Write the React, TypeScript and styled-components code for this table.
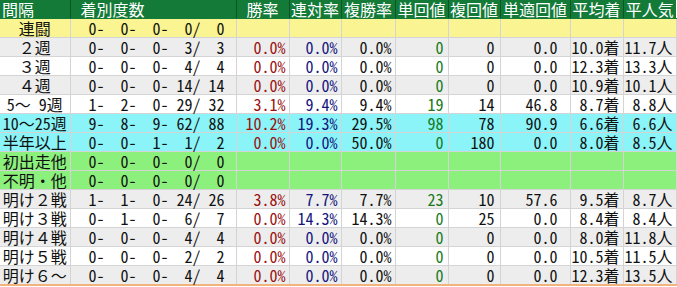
import React from "react";
import styled, { createGlobalStyle } from "styled-components";

const GlobalStyle = createGlobalStyle`
	body {
		margin: 0;
		background: #ffffff;
		font-family: "Noto Sans Mono CJK JP", "Noto Sans CJK JP", "DejaVu Sans Mono", monospace;
	}
`;

const Table = styled.table`
	border-collapse: collapse;
	table-layout: fixed;
	width: 676px;
	font-size: 16px;
	border-bottom: 2px solid #f2b47c;
`;

const HeadCell = styled.th<{ $align?: string; $pl?: number; $first?: boolean }>`
	height: 18px;
	padding: 0 0 0 ${(p) => p.$pl ?? 0}px;
	line-height: 18px;
	background: #137a38;
	color: #ffffff;
	font-weight: normal;
	text-align: ${(p) => p.$align ?? "center"};
	border-left: ${(p) => (p.$first ? "none" : "1px solid #0b5524")};
	border-bottom: 1px solid #137a38;
	white-space: nowrap;
`;

const Row = styled.tr<{ $bg: string }>`
	background: ${(p) => p.$bg};
`;

const Cell = styled.td<{ $color?: string; $pr?: number }>`
	height: 18px;
	padding: 0 ${(p) => p.$pr ?? 3}px 0 0;
	line-height: 18px;
	color: ${(p) => p.$color ?? "#111111"};
	text-align: right;
	border: 1px solid #d4d4d4;
	border-top: none;
	white-space: nowrap;
`;

const NameCell = styled(Cell)`
	padding: 0;
	text-align: center;
	border-left: none;
`;

const Counts = styled.div`
	display: grid;
	grid-template-columns: 34px 32px 32px 32px 24px;
	justify-items: end;
`;

const colors = {
	yellow: "#faf592",
	gray: "#ededed",
	white: "#ffffff",
	cyan: "#8af4f8",
	green: "#8cf07c",
};

type Data = {
	name: string;
	bg: string;
	counts: number[];
	vals?: string[];
};

const rows: Data[] = [
	{ name: "連闘", bg: colors.yellow, counts: [0, 0, 0, 0, 0] },
	{ name: "２週", bg: colors.gray, counts: [0, 0, 0, 3, 3], vals: ["0.0%", "0.0%", "0.0%", "0", "0", "0.0", "10.0着", "11.7人"] },
	{ name: "３週", bg: colors.white, counts: [0, 0, 0, 4, 4], vals: ["0.0%", "0.0%", "0.0%", "0", "0", "0.0", "12.3着", "13.3人"] },
	{ name: "４週", bg: colors.gray, counts: [0, 0, 0, 14, 14], vals: ["0.0%", "0.0%", "0.0%", "0", "0", "0.0", "10.9着", "10.1人"] },
	{ name: "5〜 9週", bg: colors.white, counts: [1, 2, 0, 29, 32], vals: ["3.1%", "9.4%", "9.4%", "19", "14", "46.8", "8.7着", "8.8人"] },
	{ name: "10〜25週", bg: colors.cyan, counts: [9, 8, 9, 62, 88], vals: ["10.2%", "19.3%", "29.5%", "98", "78", "90.9", "6.6着", "6.6人"] },
	{ name: "半年以上", bg: colors.cyan, counts: [0, 0, 1, 1, 2], vals: ["0.0%", "0.0%", "50.0%", "0", "180", "0.0", "8.0着", "8.5人"] },
	{ name: "初出走他", bg: colors.green, counts: [0, 0, 0, 0, 0] },
	{ name: "不明・他", bg: colors.green, counts: [0, 0, 0, 0, 0] },
	{ name: "明け２戦", bg: colors.gray, counts: [1, 1, 0, 24, 26], vals: ["3.8%", "7.7%", "7.7%", "23", "10", "57.6", "9.5着", "8.7人"] },
	{ name: "明け３戦", bg: colors.white, counts: [0, 1, 0, 6, 7], vals: ["0.0%", "14.3%", "14.3%", "0", "25", "0.0", "8.4着", "8.4人"] },
	{ name: "明け４戦", bg: colors.gray, counts: [0, 0, 0, 4, 4], vals: ["0.0%", "0.0%", "0.0%", "0", "0", "0.0", "8.0着", "11.8人"] },
	{ name: "明け５戦", bg: colors.white, counts: [0, 0, 0, 2, 2], vals: ["0.0%", "0.0%", "0.0%", "0", "0", "0.0", "10.5着", "11.5人"] },
	{ name: "明け６〜", bg: colors.gray, counts: [0, 0, 0, 4, 4], vals: ["0.0%", "0.0%", "0.0%", "0", "0", "0.0", "12.3着", "13.5人"] },
];

// width, text colour, right padding
const columns: { title: string; width: number; color?: string; pr: number }[] = [
	{ title: "勝率", width: 53, color: "#9a1010", pr: 3 },
	{ title: "連対率", width: 52, color: "#14147e", pr: 3 },
	{ title: "複勝率", width: 54, pr: 3 },
	{ title: "単回値", width: 53, color: "#17791a", pr: 4 },
	{ title: "複回値", width: 52, pr: 5 },
	{ title: "単適回値", width: 70, pr: 12 },
	{ title: "平均着", width: 53, pr: 3 },
	{ title: "平人気", width: 53, pr: 3 },
];

const CountCell = ({ counts }: { counts: number[] }) => (
	<Counts>
		<span>{counts[0]}-</span>
		<span>{counts[1]}-</span>
		<span>{counts[2]}-</span>
		<span>{counts[3]}/</span>
		<span>{counts[4]}</span>
	</Counts>
);

const App = () => {
	return (
		<>
			<GlobalStyle />
			<Table>
				<colgroup>
					<col style={{ width: 70 }} />
					<col style={{ width: 166 }} />
					{columns.map((c) => (
						<col key={c.title} style={{ width: c.width }} />
					))}
				</colgroup>
				<thead>
					<tr>
						<HeadCell $align="left" $pl={2} $first>
							間隔
						</HeadCell>
						<HeadCell $align="left" $pl={10}>
							着別度数
						</HeadCell>
						{columns.map((c) => (
							<HeadCell key={c.title}>{c.title}</HeadCell>
						))}
					</tr>
				</thead>
				<tbody>
					{rows.map((r) => (
						<Row key={r.name} $bg={r.bg}>
							<NameCell>{r.name}</NameCell>
							<Cell $pr={0}>
								<CountCell counts={r.counts} />
							</Cell>
							{columns.map((c, i) => (
								<Cell key={c.title} $color={c.color} $pr={c.pr}>
									{r.vals ? r.vals[i] : ""}
								</Cell>
							))}
						</Row>
					))}
				</tbody>
			</Table>
		</>
	);
};

export default App;
